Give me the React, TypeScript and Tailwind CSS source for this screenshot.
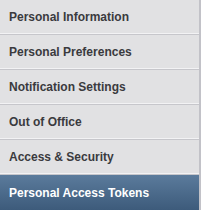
import React from "react";

const items = [
  "Personal Information",
  "Personal Preferences",
  "Notification Settings",
  "Out of Office",
  "Access & Security",
  "Personal Access Tokens",
];

export default function App() {
  return (
    <div className="w-[201px] h-[210px] bg-[#e1e1e3] border-r-2 border-[#c2c2c8] flex flex-col font-['Liberation_Sans',Arial,sans-serif]">
      {items.map((label, i) => {
        const active = i === items.length - 1;
        return active ? (
          <div
            key={label}
            className="h-[35px] flex items-center pl-[9px] text-[12px] font-bold text-white bg-gradient-to-b from-[#5b7b9c] to-[#3d5b7b]"
          >
            {label}
          </div>
        ) : (
          <div
            key={label}
            className="h-[35px] flex items-center pl-[9px] text-[12px] font-bold text-[#3a3a3e] border-b border-[#c6c6cb] shadow-[inset_0_-1px_0_#f2f2f4]"
          >
            {label}
          </div>
        );
      })}
    </div>
  );
}
